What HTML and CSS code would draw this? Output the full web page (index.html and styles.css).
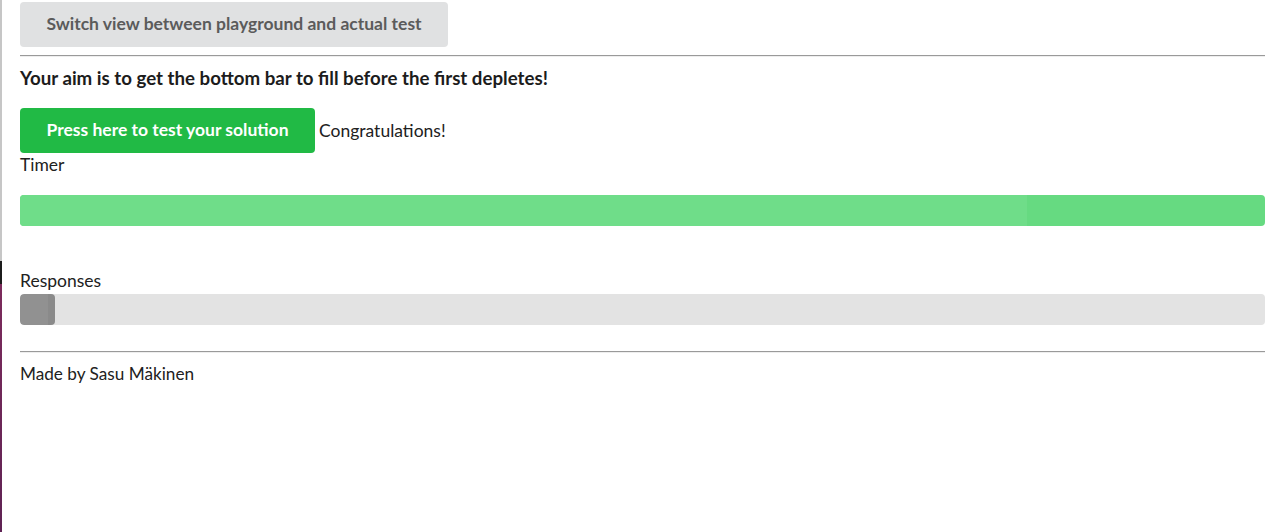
FILE: index.html
```html
<!DOCTYPE html>
<html>
<head>
<meta charset="utf-8">
<link rel="stylesheet" href="styles.css">
</head>
<body>
<div class="edge"></div>
<main class="page">
  <button class="btn btn-grey">Switch view between playground and actual test</button>
  <hr class="rule rule-top">
  <h3 class="aim">Your aim is to get the bottom bar to fill before the first depletes!</h3>
  <div class="test-row">
    <button class="btn btn-green">Press here to test your solution</button>
    <span class="result">Congratulations!</span>
  </div>
  <div class="label">Timer</div>
  <div class="bar bar-timer"><div class="fill fill-timer" style="width:80.9%"></div></div>
  <div class="label label-responses">Responses</div>
  <div class="bar bar-responses"><div class="fill fill-responses" style="width:35px"></div></div>
  <hr class="rule rule-bottom">
  <div class="footer">Made by Sasu Mäkinen</div>
</main>
</body>
</html>
```

FILE: styles.css
```css
html, body {
  margin: 0;
  padding: 0;
  background: #fff;
}
body {
  font-family: Lato, "Open Sans", sans-serif;
  font-size: 17.5px;
  line-height: 24px;
  color: #212121;
}
.edge {
  position: fixed;
  left: 0;
  top: 0;
  bottom: 0;
  width: 2px;
  background: linear-gradient(to bottom, #c6c6c6 0, #c6c6c6 261px, #1c1c1c 261px, #1c1c1c 284px, #7c2b5c 284px, #5f2354 100%);
}
.page {
  padding: 2px 9px 0 20px;
}
.btn {
  font-family: Lato, "Open Sans", sans-serif;
  font-weight: 700;
  font-size: 17.5px;
  line-height: 17px;
  border: none;
  border-radius: 4px;
  padding: 13px 0 15px;
  margin: 0;
  cursor: pointer;
  display: inline-block;
}
.btn-grey {
  background: #e0e1e2;
  color: #5b5b5b;
  width: 428px;
}
.btn-green {
  background: #21ba45;
  color: #fff;
  width: 295px;
}
.rule {
  border: none;
  border-top: 1px solid #9a9a9a;
  border-bottom: 1px solid #eeeeee;
  margin: 0;
}
.rule-top {
  margin-top: 8px;
}
.aim {
  font-size: 18.7px;
  font-weight: 700;
  line-height: 24px;
  margin: 9px 0 18px;
  color: #1c1c1c;
}
.test-row {
  display: flex;
  align-items: flex-end;
  gap: 4px;
}
.result {
  line-height: 24px;
  padding-bottom: 10px;
}
.label {
  line-height: 24px;
}
.bar {
  height: 31px;
  border-radius: 4px;
  overflow: hidden;
  display: flex;
}
.bar-timer {
  background: #66da81;
  margin-top: 18px;
}
.fill-timer {
  background: #6fdd89;
  height: 100%;
}
.label-responses {
  margin-top: 43px;
}
.bar-responses {
  background: #e3e3e3;
  margin-top: 1px;
}
.fill-responses {
  background: linear-gradient(to right, #919191 0, #919191 28px, #8a8a8a 28px);
  border-radius: 4px;
  height: 100%;
}
.rule-bottom {
  margin-top: 26px;
}
.footer {
  font-size: 17.2px;
  margin-top: 9px;
}
```
